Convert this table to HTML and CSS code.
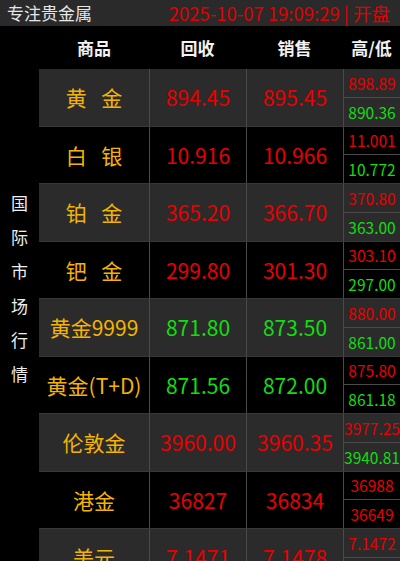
FILE: index.html
```html
<!DOCTYPE html>
<html lang="zh">
<head>
<meta charset="utf-8">
<title>专注贵金属</title>
<link rel="stylesheet" href="styles.css">
</head>
<body>
<div class="topbar">
  <span class="brand">专注贵金属</span>
  <span class="clock">2025-10-07 19:09:29 | 开盘</span>
</div>
<div class="head">
  <span></span>
  <span>商品</span>
  <span>回收</span>
  <span>销售</span>
  <span>高/低</span>
</div>
<div class="body">
  <div class="side">
    <span>国</span><span>际</span><span>市</span><span>场</span><span>行</span><span>情</span>
  </div>
  <div class="rows">
    <div class="row alt">
      <div class="cell name spaced">黄 金</div>
      <div class="cell val up">894.45</div>
      <div class="cell val up">895.45</div>
      <div class="cell hl"><span class="up">898.89</span><span class="down">890.36</span></div>
    </div>
    <div class="row">
      <div class="cell name spaced">白 银</div>
      <div class="cell val up">10.916</div>
      <div class="cell val up">10.966</div>
      <div class="cell hl"><span class="up">11.001</span><span class="down">10.772</span></div>
    </div>
    <div class="row alt">
      <div class="cell name spaced">铂 金</div>
      <div class="cell val up">365.20</div>
      <div class="cell val up">366.70</div>
      <div class="cell hl"><span class="up">370.80</span><span class="down">363.00</span></div>
    </div>
    <div class="row">
      <div class="cell name spaced">钯 金</div>
      <div class="cell val up">299.80</div>
      <div class="cell val up">301.30</div>
      <div class="cell hl"><span class="up">303.10</span><span class="down">297.00</span></div>
    </div>
    <div class="row alt">
      <div class="cell name">黄金9999</div>
      <div class="cell val down">871.80</div>
      <div class="cell val down">873.50</div>
      <div class="cell hl"><span class="up">880.00</span><span class="down">861.00</span></div>
    </div>
    <div class="row">
      <div class="cell name">黄金(T+D)</div>
      <div class="cell val down">871.56</div>
      <div class="cell val down">872.00</div>
      <div class="cell hl"><span class="up">875.80</span><span class="down">861.18</span></div>
    </div>
    <div class="row alt">
      <div class="cell name">伦敦金</div>
      <div class="cell val up">3960.00</div>
      <div class="cell val up">3960.35</div>
      <div class="cell hl"><span class="up">3977.25</span><span class="down">3940.81</span></div>
    </div>
    <div class="row">
      <div class="cell name">港金</div>
      <div class="cell val up">36827</div>
      <div class="cell val up">36834</div>
      <div class="cell hl"><span class="up">36988</span><span class="up">36649</span></div>
    </div>
    <div class="row alt">
      <div class="cell name">美元</div>
      <div class="cell val up">7.1471</div>
      <div class="cell val up">7.1478</div>
      <div class="cell hl"><span class="up">7.1472</span><span class="down">7.1466</span></div>
    </div>
  </div>
</div>
</body>
</html>
```
FILE: styles.css
```css
* { box-sizing: border-box; }
html, body {
  margin: 0;
  padding: 0;
  background: #000;
  width: 400px;
  height: 561px;
  overflow: hidden;
  font-family: "Noto Sans CJK SC", "Noto Sans", sans-serif;
}
.topbar {
  height: 26px;
  background: #2a2a2a;
  display: flex;
  justify-content: space-between;
  align-items: center;
  padding: 0 10px 0 7px;
  font-size: 17px;
  line-height: 26px;
}
.brand { color: #e6e6e6; }
.clock { color: #e00000; font-size: 18.5px; }
.head {
  height: 43px;
  display: grid;
  grid-template-columns: 39px 110px 97px 97px 57px;
  align-items: center;
  color: #f2f2f2;
  font-weight: bold;
  font-size: 17px;
  text-align: center;
}
.body {
  display: flex;
}
.side {
  width: 39px;
  flex: none;
  display: flex;
  flex-direction: column;
  align-items: center;
  padding-top: 117px;
  color: #eee;
  font-size: 17px;
  line-height: 34.2px;
}
.rows {
  flex: 1;
}
.row {
  height: 57.5px;
  display: grid;
  grid-template-columns: 110px 97px 97px 1fr;
  background: #000;
  border-bottom: 1px solid #383838;
}
.row.alt { background: #2b2b2b; }
.cell {
  display: flex;
  align-items: center;
  justify-content: center;
  white-space: nowrap;
  min-width: 0;
}
.cell + .cell { border-left: 1px solid #4a4a4a; }
.name {
  color: #f5b400;
  font-size: 21px;
}
.spaced { word-spacing: 10px; }
.val { font-size: 21px; }
.up { color: #e80000; }
.down { color: #12dd12; }
.hl {
  flex-direction: column;
  align-items: stretch;
  overflow: hidden;
}
.hl span {
  flex: 1;
  display: flex;
  align-items: center;
  justify-content: center;
  font-size: 15.5px;
  white-space: nowrap;
}
.hl span + span { border-top: 1px solid #4a4a4a; }
```
